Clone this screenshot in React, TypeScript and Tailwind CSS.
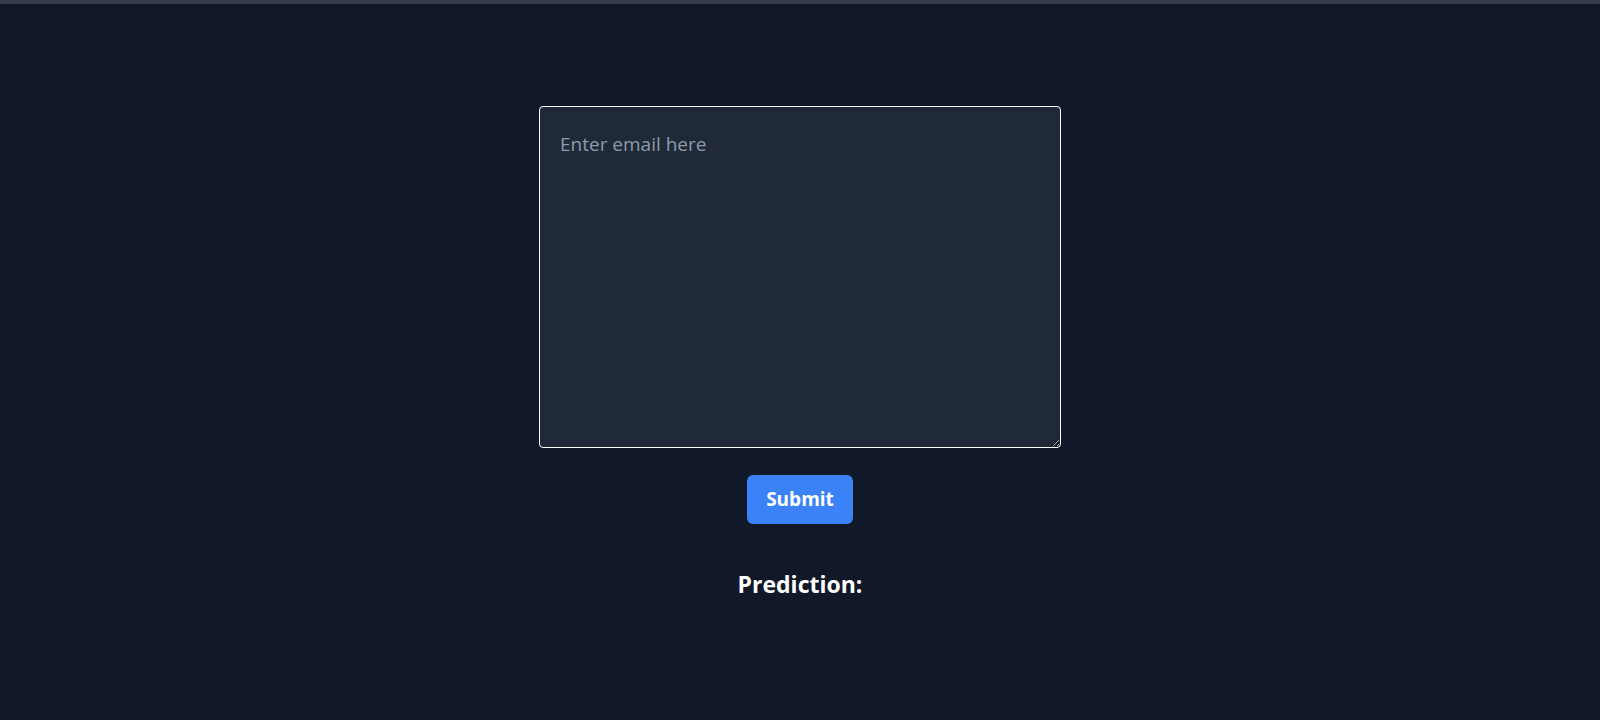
export default function App() {
    return (
        <div className="min-h-screen bg-[#111827] text-white font-['Open_Sans',sans-serif]">
            <div className="h-1 bg-[#363a4a]" />

            <div className="flex flex-col items-center pt-[102px]">
                <textarea
                    placeholder="Enter email here"
                    className="w-[522px] h-[342px] bg-[#1f2937] border border-white rounded px-5 pt-[23px] pb-5 text-[19px] leading-7 text-white placeholder:text-[#8e9aab] outline-none"
                />

                <button className="mt-[27px] bg-[#3b82f6] text-white font-bold text-[19px] px-[19px] py-[11px] leading-[27px] rounded-md">
                    Submit
                </button>

                <h2 className="mt-[44px] text-[23px] font-bold leading-8">Prediction:</h2>
            </div>
        </div>
    )
}
